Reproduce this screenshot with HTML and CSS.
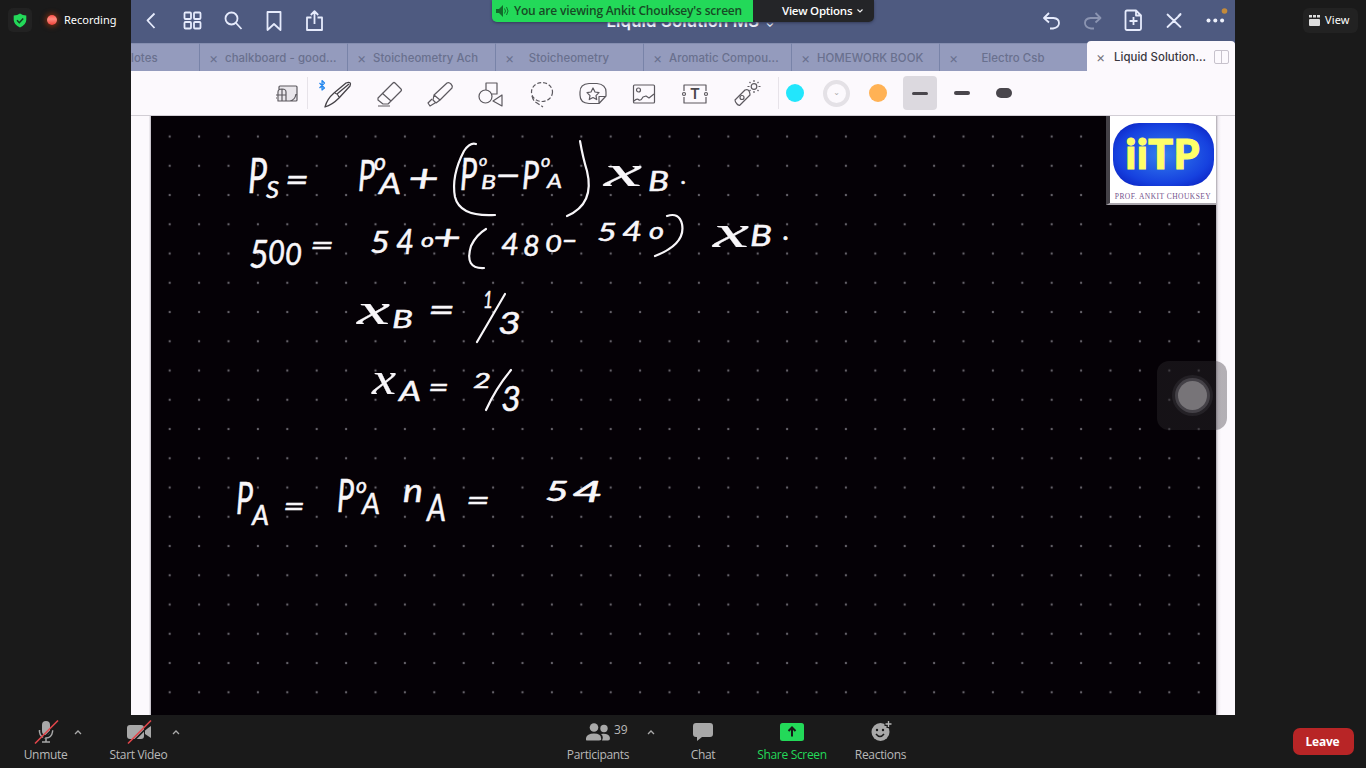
FILE: index.html
```html
<!DOCTYPE html>
<html lang="en">
<head>
<meta charset="utf-8">
<title>Shared screen</title>
<link rel="stylesheet" href="styles.css">
</head>
<body>
<div class="meeting">
  <aside class="side left">
    <span class="shield"><svg width="14" height="15" viewBox="0 0 14 15"><path d="M7 .5Q9.600 2.300 13.300 2.600V7Q13 12 7 14.500Q1 12 .7 7V2.600Q4.400 2.300 7 .5Z" fill="#23d959"/><path d="M4 7.300l2.300 2.400L10.200 5.500" fill="none" stroke="#143c20" stroke-width="1.500"/></svg></span>
    <i class="rec-dot"></i><span class="rec-label">Recording</span>
  </aside>
  <main class="share">
    <nav class="nav">
      <div class="nav-icons">
        <svg viewBox="0 0 30 30"><path d="M18 8.500l-7 7L18 23"/></svg>
        <svg viewBox="0 0 30 30"><rect x="7" y="7.500" width="6.500" height="6.500" rx="1"/><rect x="16.500" y="7.500" width="6.500" height="6.500" rx="1"/><rect x="7" y="17" width="6.500" height="6.500" rx="1"/><rect x="16.500" y="17" width="6.500" height="6.500" rx="1"/></svg>
        <svg viewBox="0 0 30 30"><circle cx="13" cy="13.500" r="6"/><path d="M17.500 18l5.500 6"/></svg>
        <svg viewBox="0 0 30 30"><path d="M8 7h13V25L14.500 19l-6.500 6Z"/></svg>
        <svg viewBox="0 0 30 30"><path d="M11 12.500H6.500v12.500h15V12.500H17M14 19V6.500M10.300 10l3.700-3.800 3.700 3.800"/></svg>
      </div>
      <h1>Liquid Solution MS <small>⌄</small></h1>
      <div class="nav-icons">
        <svg viewBox="0 0 30 30"><path d="M13.500 8l-5 5 5 4.500M9 13H18q5.500 .5 5.500 5t-6 5.500h-3"/></svg>
        <svg class="muted" viewBox="0 0 30 30"><path d="M19 8l5 5-5 4.500M23.500 13H14q-5.500 .5-5.500 5t6 5.500h3"/></svg>
        <svg viewBox="0 0 30 30"><path d="M9 5.500h9.500l5 5V23.500q0 1.500-1.500 1.500H9.500q-1.500 0-1.500-1.500V7q0-1.500 1.500-1.500M18.500 5.500v5h5M12 16h8M16 12v8"/></svg>
        <svg viewBox="0 0 30 30"><path d="M9 9.500L22 22M9 22L22 9.500M10 10.500l2 2M20 11l2-2" stroke-linecap="round"/></svg>
        <svg viewBox="0 0 30 30"><g class="dots"><circle cx="9" cy="15.500" r="2"/><circle cx="15.800" cy="15.500" r="2"/><circle cx="22.600" cy="15.500" r="2"/></g><circle class="alert" cx="25" cy="6" r="2.800"/></svg>
      </div>
    </nav>
    <div class="tabs">
      <div class="tab first"><span>lotes</span></div>
      <div class="tab"><b>×</b><span>chalkboard - good...</span></div>
      <div class="tab"><b>×</b><span>Stoicheometry Ach</span></div>
      <div class="tab"><b>×</b><span>Stoicheometry</span></div>
      <div class="tab"><b>×</b><span>Aromatic Compou...</span></div>
      <div class="tab"><b>×</b><span>HOMEWORK BOOK</span></div>
      <div class="tab"><b>×</b><span>Electro Csb</span></div>
      <div class="tab active"><b>×</b><span>Liquid Solution...</span><i class="split"></i></div>
    </div>
    <div class="tools">
      <div class="tool lined"><svg viewBox="0 0 32 32"><path class="tray" d="M8 8h18v15H8Z"/><path d="M8 12V9q0-1 1-1h16q1 0 1 1v13q0 1-1 1H7V14q0-3 4-3t4 3v9M5 17h10M6 20H5M11 11v12M19 23q5-1 6-7"/></svg></div>
      <div class="tool pen"><svg viewBox="0 0 32 32"><path d="M3 29q2-8 9-14L24 5q6-2 4 3L17 20Q10 27 3 29ZM13 15q3 1 4 4M15 16L27 6"/><path class="bt" d="M-2.500 5l5 5-2.500 2V2.500L2.500 5l-5 5"/></svg></div>
      <div class="tool"><svg viewBox="0 0 32 32"><path d="M5 20L20 5q1-1 2 0l6 6q1 1 0 2L15 26H10l-5-4ZM9 15l9 8M5 28h12"/></svg></div>
      <div class="tool"><svg viewBox="0 0 32 32"><path d="M10 17L23 5q2-1 4 1t1 4L16 22ZM10 17l-1 5 3 3 4-3M8 21l-4 4 2 3 5-3"/></svg></div>
      <div class="tool"><svg viewBox="0 0 32 32"><circle cx="10.500" cy="18.500" r="6.500"/><path d="M11 12V5h11v11h-5M27 17v11l-9-5Z"/></svg></div>
      <div class="tool"><svg viewBox="0 0 32 32"><ellipse cx="16" cy="14" rx="10.500" ry="9.500" stroke-dasharray="4 2"/><path d="M6 18q1 5 5 7l6 4" stroke-dasharray="5 2"/></svg></div>
      <div class="tool"><svg viewBox="0 0 32 32"><path d="M12 5.500h8q9 1 9 8.500v4l-7 7.500H12Q3 25 3 17v-3q0-8 9-8.500ZM22 25.500v-7h7"/><path d="M16 10l2 4 4 .6-3 3 .7 4L16 19.500 12.300 21.600l.7-4-3-3 4-.6Z"/></svg></div>
      <div class="tool"><svg viewBox="0 0 32 32"><rect x="5.500" y="7" width="21" height="18" rx="1"/><circle cx="10.500" cy="12" r="2"/><path d="M6 23q3-3 5-1 2 1 4-3l3-1 3 2 5-4"/></svg></div>
      <div class="tool"><svg viewBox="0 0 32 32"><path d="M5 13V7h22v6M5 19v6h22v-6"/><circle cx="5" cy="16" r="1.500"/><circle cx="27" cy="16" r="1.500"/><text x="16" y="21" text-anchor="middle">T</text></svg></div>
      <div class="tool"><svg viewBox="0 0 32 32"><path d="M5 22L15 12q3-1 4 1t1 4L10 27q-1 1-3-1t-2-4Z"/><circle cx="12" cy="19.500" r="2"/><circle cx="24" cy="8.500" r="2.800"/><path d="M24 2v2M24 13v2M17.500 8.500h2M28.500 8.500h2M19.500 4l1 1M27.500 12l1 1M28.500 4l-1 1M20.500 12l-1 1"/></svg></div>
      <div class="inks">
        <span><i class="ink cyan"></i></span><span><i class="ink white">⌄</i></span><span><i class="ink orange"></i></span>
        <span class="chosen"><i class="nib thin"></i></span><span><i class="nib"></i></span><span><i class="nib thick"></i></span>
      </div>
    </div>
    <section class="page">
      <svg class="board" width="1065" height="599" viewBox="151 116 1065 599">
        <defs><pattern id="grid" x="155" y="121.900" width="29.400" height="29.250" patternUnits="userSpaceOnUse"><circle cx="14.700" cy="14.600" r="1.150" fill="#66636a"/></pattern></defs>
        <rect x="151" y="116" width="1065" height="599" fill="#050106"/>
        <rect x="151" y="116" width="1065" height="599" fill="url(#grid)"/>
        <g class="ink-text">
          <text x="248" y="193" font-size="48" textLength="19" lengthAdjust="spacingAndGlyphs">P</text>
          <text x="266" y="198" font-size="24" textLength="13" lengthAdjust="spacingAndGlyphs">S</text>
          <text x="285" y="192" font-size="34" textLength="24" lengthAdjust="spacingAndGlyphs">=</text>
          <text x="358" y="191" font-size="43" textLength="17" lengthAdjust="spacingAndGlyphs">P</text>
          <text x="374" y="170" font-size="23" textLength="12">o</text>
          <text x="379" y="194" font-size="28" textLength="22" lengthAdjust="spacingAndGlyphs">A</text>
          <text x="408" y="192" font-size="38" textLength="31" lengthAdjust="spacingAndGlyphs">+</text>
          <text x="460" y="190" font-size="44" textLength="17" lengthAdjust="spacingAndGlyphs">P</text>
          <text x="479" y="166" font-size="16" textLength="10">o</text>
          <text x="481" y="189" font-size="20" textLength="15" lengthAdjust="spacingAndGlyphs">B</text>
          <text x="495" y="188" font-size="34" textLength="26" lengthAdjust="spacingAndGlyphs">−</text>
          <text x="522" y="189" font-size="39" textLength="17" lengthAdjust="spacingAndGlyphs">P</text>
          <text x="541" y="167" font-size="18" textLength="11">o</text>
          <text x="547" y="188" font-size="20" textLength="15" lengthAdjust="spacingAndGlyphs">A</text>
          <text class="var" x="604" y="186" font-size="45" textLength="38" lengthAdjust="spacingAndGlyphs">x</text>
          <text x="648" y="191" font-size="27" textLength="21" lengthAdjust="spacingAndGlyphs">B</text><text x="681" y="184" font-size="24">.</text>
          <text x="249" y="268" font-size="39" textLength="20" lengthAdjust="spacingAndGlyphs">5</text>
          <text x="268" y="264" font-size="33" textLength="17" lengthAdjust="spacingAndGlyphs">0</text>
          <text x="285" y="265" font-size="30" textLength="17" lengthAdjust="spacingAndGlyphs">0</text>
          <text x="310" y="255" font-size="29" textLength="24" lengthAdjust="spacingAndGlyphs">=</text>
          <text x="370" y="253" font-size="30" textLength="20" lengthAdjust="spacingAndGlyphs">5</text><text x="396" y="254" font-size="35" textLength="18" lengthAdjust="spacingAndGlyphs">4</text><text x="421" y="247" font-size="20" textLength="13" lengthAdjust="spacingAndGlyphs">o</text><text x="433" y="250" font-size="34" textLength="28" lengthAdjust="spacingAndGlyphs">+</text>
          <text x="501" y="255" font-size="31" textLength="17">4</text><text x="523" y="256" font-size="29" textLength="17">8</text><text x="545" y="252" font-size="24" textLength="17" lengthAdjust="spacingAndGlyphs">0</text><text x="562" y="251" font-size="28" textLength="15" lengthAdjust="spacingAndGlyphs">−</text>
          <text x="597" y="241" font-size="26" textLength="20" lengthAdjust="spacingAndGlyphs">5</text><text x="622" y="241" font-size="27" textLength="20" lengthAdjust="spacingAndGlyphs">4</text><text x="649" y="239" font-size="23" textLength="15" lengthAdjust="spacingAndGlyphs">o</text>
          <text class="var" x="713" y="247" font-size="46" textLength="36" lengthAdjust="spacingAndGlyphs">x</text><text x="750" y="246" font-size="28" textLength="22" lengthAdjust="spacingAndGlyphs">B</text><text x="783" y="240" font-size="28">.</text>
          <text class="var" x="357" y="324" font-size="44" textLength="33" lengthAdjust="spacingAndGlyphs">x</text><text x="392" y="328" font-size="26" textLength="21" lengthAdjust="spacingAndGlyphs">B</text><text x="428" y="322" font-size="34" textLength="27" lengthAdjust="spacingAndGlyphs">=</text><text x="483" y="308" font-size="24" textLength="10" lengthAdjust="spacingAndGlyphs">1</text><text x="498" y="334" font-size="31" textLength="23" lengthAdjust="spacingAndGlyphs">3</text>
          <text class="var" x="372" y="394" font-size="46" textLength="24" lengthAdjust="spacingAndGlyphs">x</text><text x="399" y="401" font-size="27" textLength="22" lengthAdjust="spacingAndGlyphs">A</text><text x="428" y="398" font-size="30" textLength="21" lengthAdjust="spacingAndGlyphs">=</text><text x="473" y="388" font-size="21" textLength="18" lengthAdjust="spacingAndGlyphs">2</text><text x="501" y="411" font-size="35" textLength="20" lengthAdjust="spacingAndGlyphs">3</text>
          <text x="236" y="514" font-size="45" textLength="17" lengthAdjust="spacingAndGlyphs">P</text><text x="252" y="525" font-size="27" textLength="17" lengthAdjust="spacingAndGlyphs">A</text><text x="283" y="516" font-size="29" textLength="22" lengthAdjust="spacingAndGlyphs">=</text>
          <text x="337" y="512" font-size="46" textLength="17" lengthAdjust="spacingAndGlyphs">P</text><text x="356" y="493" font-size="21" textLength="14">o</text><text x="362" y="514" font-size="29" textLength="18" lengthAdjust="spacingAndGlyphs">A</text><text x="403" y="502" font-size="32" textLength="20" lengthAdjust="spacingAndGlyphs">n</text><text x="427" y="521" font-size="37" textLength="19" lengthAdjust="spacingAndGlyphs">A</text><text x="466" y="510" font-size="29" textLength="24" lengthAdjust="spacingAndGlyphs">=</text>
          <text x="545" y="501" font-size="27" textLength="24" lengthAdjust="spacingAndGlyphs">5</text><text x="572" y="502" font-size="29" textLength="31" lengthAdjust="spacingAndGlyphs">4</text>
        </g>
        <g class="stroke">
          <path d="M476 144q-6-2-12 7q-13 25-9 46q5 20 40 18"/>
          <path d="M580 141q3 17 7 30q8 33-20 45"/>
          <path d="M486 229q-10 6-15 17q-7 23 13 22"/>
          <path d="M667 216q12-4 15 8q4 20-27 32"/>
          <path d="M505 294l-28 48M511 370q-15 18-25 40"/>
        </g>
      </svg>
      <div class="logo"><div class="oval">iiTP</div><p>PROF. ANKIT CHOUKSEY</p></div>
      <div class="assist"><i></i></div>
    </section>
    <div class="banner"><span class="viewing"><svg width="13" height="12" viewBox="0 0 13 12"><path d="M0 4h3l4-4v12L3 8H0Z" fill="#126b2b"/><path d="M8.500 3.500q2 2.500 0 5M10.500 2q3 4 0 8" fill="none" stroke="#126b2b"/></svg><span class="viewing-text">You are viewing Ankit Chouksey's screen</span></span><span class="options"><span>View Options</span><svg width="8" height="6" viewBox="0 0 8 6"><path d="M1.500 1.500l2.500 2.500 2.500-2.500" fill="none" stroke="#eee" stroke-width="1.200"/></svg></span></div>
  </main>
  <aside class="side right"><span class="view"><svg width="11" height="11" viewBox="0 0 11 11" fill="#ddd"><rect width="3" height="2.500"/><rect x="4" width="3" height="2.500"/><rect x="8" width="3" height="2.500"/><rect y="4" width="11" height="7" rx="1"/></svg><span>View</span></span></aside>
  <footer class="controls">
    <div class="control unmute"><svg width="26" height="26" viewBox="0 0 26 26"><rect x="9" y="2" width="8" height="14" rx="4" fill="#a8a8a8"/><path d="M6.500 11v2q1 6 6.500 6t6.500-6v-2M13 19v4M9 23h8" class="line"/><path class="slash-gap" d="M3.500 26L26.500 3"/><path class="slash" d="M2 24.500l23-23"/></svg><span>Unmute</span></div>
    <svg class="caret c1" viewBox="0 0 8 6"><path d="M1 5l3-3 3 3"/></svg>
    <div class="control video"><svg width="26" height="26" viewBox="0 0 26 26"><rect x="1" y="6" width="17" height="14" rx="3" fill="#a8a8a8"/><path d="M19 11l6-4v12l-6-4Z" fill="#a8a8a8"/><path class="slash-gap" d="M3.500 26L26.500 3"/><path class="slash" d="M2 24.500l23-23"/></svg><span>Start Video</span></div>
    <svg class="caret c2" viewBox="0 0 8 6"><path d="M1 5l3-3 3 3"/></svg>
    <div class="control people"><svg width="26" height="26" viewBox="0 0 26 26" fill="#a8a8a8"><circle cx="9" cy="8.500" r="4.300"/><circle cx="19" cy="9.500" r="3.700"/><path d="M1 21v-2q1-4.500 8-4.500t7 4.500q1 2.500-2 2.500H3q-2 0-2-.5ZM17 21.500q2-4-1-6.500 8-1 9 4 0 2.500-2 2.500Z"/></svg><em>39</em><span>Participants</span></div>
    <svg class="caret c3" viewBox="0 0 8 6"><path d="M1 5l3-3 3 3"/></svg>
    <div class="control chat"><svg width="26" height="26" viewBox="0 0 26 26"><path d="M6 4h14q3 0 3 3v8q0 3-3 3h-8l-5 4v-4H6q-3 0-3-3V7q0-3 3-3Z" fill="#a8a8a8"/></svg><span>Chat</span></div>
    <div class="control sharing"><svg width="26" height="26" viewBox="0 0 26 26"><rect x="1" y="4" width="24" height="18" rx="2.500" fill="#23d959"/><path d="M13 17.500V9M9.500 12L13 8.500l3.500 3.500" fill="none" stroke="#181818" stroke-width="2"/></svg><span>Share Screen</span></div>
    <div class="control react"><svg width="26" height="26" viewBox="0 0 26 26"><circle cx="12.500" cy="13" r="9" fill="#a8a8a8"/><circle cx="9" cy="11" r="1.200" fill="#191919"/><circle cx="15" cy="11" r="1.200" fill="#191919"/><path d="M8 15q4 5 8 0" fill="none" stroke="#191919" stroke-width="1.500"/><path d="M20.500 1v8M16.500 5h8" stroke="#191919" stroke-width="4"/><path d="M20.500 2v6M17.500 5h6" stroke="#b5b5b5" stroke-width="1.300"/></svg><span>Reactions</span></div>
    <button class="leave">Leave</button>
  </footer>
</div>
</body>
</html>
```
FILE: styles.css
```css
* { box-sizing: border-box; }
body { margin: 0; width: 1366px; height: 768px; overflow: hidden; background: #1a1a1a; font-family: "Open Sans", sans-serif; }
.meeting { display: grid; grid-template: 715px 53px / 131px 1104px 131px; }
.side { display: flex; align-items: flex-start; color: #fff; font: 12px/20px "Noto Sans", sans-serif; }
.left { padding: 8px 0 0 8px; }
.shield { width: 24px; height: 24px; display: grid; place-items: center; background: #222; border-radius: 5px; }
.rec-dot { width: 10px; height: 10px; margin: 7px 7px 0 15px; border-radius: 50%; background: linear-gradient(#ff5148, #ff8b80 40%, #f24137); box-shadow: 0 0 5px 2px #6b2b12; }
.rec-label { padding-top: 2px; font-size: 11px; }
.right { justify-content: flex-end; padding: 8px 8px 0 0; }
.view { display: flex; align-items: center; gap: 5px; width: 55px; height: 25px; padding: 0 0 1px 6px; background: #222; border-radius: 6px; font-size: 11px; letter-spacing: .15px; }
.share { position: relative; display: grid; grid-template-rows: 43px 28px 45px 599px; overflow: hidden; font-family: Inter, sans-serif; background: #fcf9fd; }
.nav { display: flex; justify-content: space-between; background: #4e5a80; color: #eef1fb; }
.nav h1 { margin: 0; padding-left: 15px; font-size: 16.8px; line-height: 42px; font-weight: 600; letter-spacing: .1px; }
.nav small { font-size: 11px; margin-left: 2px; }
.nav-icons { display: flex; }
.nav-icons svg { width: 41px; height: 30px; margin-top: 5px; fill: none; stroke: #e6ebfc; stroke-width: 1.8; stroke-linejoin: round; overflow: visible; }
.nav-icons .muted { opacity: .4; }
.nav-icons .dots { fill: #eef1fb; stroke: none; }
.nav-icons .alert { fill: #c38a3a; stroke: none; }
.tabs { display: grid; grid-template-columns: 68px repeat(7, 148px); background: #949bbd; }
.tab { display: flex; align-items: center; border-left: 1px solid #7883a8; border-top: 1px solid #858eb0; font-size: 11.4px; color: #69708e; white-space: nowrap; font-weight: 500; letter-spacing: .06px; }
.tab.first { border-left: 0; overflow: hidden; }
.tab b { width: 25px; padding: 0 0 1px 9px; font-size: 14px; font-weight: 400; flex: none; }
.tab span { width: 96px; text-align: center; }
.tab.first span { text-align: left; }
.tab.active { margin-top: -2px; background: #fcf9fd; color: #39373f; border: 0; border-radius: 4px 4px 0 0; padding-top: 2px; }
.active b { color: #77747b; }
.split { width: 15px; height: 14px; margin-left: 6px; border: 1px solid #c7c2cc; border-radius: 2px; background: linear-gradient(90deg, transparent 6px, #c7c2cc 6px, #c7c2cc 7px, transparent 7px); }
.tools { display: flex; padding-left: 130px; border-bottom: 1px solid #d2ced5; }
.tool { width: 51.1px; height: 44px; padding-top: 1px; display: grid; place-items: center; }
.tool.lined { background: linear-gradient(#e7e3e9, #e7e3e9) 46px 6px / 1px 32px no-repeat; }
.tool svg { width: 32px; height: 32px; fill: none; stroke: #5c595f; stroke-width: 1.2; stroke-linejoin: round; overflow: visible; }
.tool text { font: 600 15px Inter, sans-serif; stroke: none; fill: #4b484e; }
.tool .tray { fill: #e9e6eb; stroke: none; }
.tool.pen svg { stroke-width: 1.3; stroke: #454247; }
.tool .bt { stroke: #2286ed; stroke-width: 1.2; }
.inks { display: flex; margin-left: 2px; background: linear-gradient(#e7e3e9, #e7e3e9) 4px 6px / 1px 32px no-repeat; }
.inks span { width: 41.8px; height: 44px; display: grid; place-items: center; }
.inks .chosen { width: 34px; height: 34px; margin: 5px 3.9px; border-radius: 4px; background: #dcd9df; }
.ink { width: 18px; height: 18px; border-radius: 50%; font: 8px/18px "DejaVu Sans", sans-serif; text-align: center; }
.cyan { background: #22e6fc; }
.orange { background: #ffb255; }
.white { width: 27px; height: 27px; border: 4px solid #e4e1e6; color: #aaa; }
.nib { width: 16px; height: 4px; border-radius: 2px; background: #49464c; }
.nib.thin { height: 3px; }
.nib.thick { height: 10px; border-radius: 5px; }
.page { position: relative; padding-left: 20px; background: linear-gradient(90deg, transparent 18px, #b8b4bc 20px, transparent 20px, transparent 1085px, #aaa6ad 1085px, #eeeaf0 1087px, #fcf9fd 1090px); }
.board { display: block; }
.ink-text { fill: #f8f6f9; stroke: #f8f6f9; stroke-width: .5; stroke-linejoin: round; font-family: Lato, sans-serif; font-style: italic; }
.ink-text .var { font-family: "Liberation Serif", serif; stroke-width: .2; }
.stroke { fill: none; stroke: #f8f6f9; stroke-width: 2.2; stroke-linecap: round; stroke-linejoin: round; }
.logo { position: absolute; top: 0; right: 19px; width: 110px; height: 89px; padding-top: 7px; background: #fff; border-left: 4px solid #444147; border-bottom: 2px solid #aaa6ad; text-align: center; }
.oval { width: 101px; height: 63px; margin: auto; border-radius: 26px; background: radial-gradient(#347fee, #1641df 65%, #0615b5); font: 900 41px/61px Lato, sans-serif; color: #ffff69; letter-spacing: .8px; -webkit-text-stroke: 1.2px #ffff69; }
.logo p { margin: 6px 0 0; font: 7.5px/9px "Liberation Serif", serif; color: #74518c; letter-spacing: .45px; white-space: nowrap; }
.assist { position: absolute; left: 1026px; top: 245px; width: 70px; height: 69px; border-radius: 12px; background: linear-gradient(90deg, rgba(35, 32, 36, .55) 59px, rgba(70, 65, 72, .4) 59px); display: grid; place-items: center; }
.assist i { width: 29px; height: 29px; border-radius: 50%; background: #777478; box-shadow: 0 0 0 3px #444147, 0 0 0 6px #242126; }
.banner { position: absolute; left: 361px; top: 0; display: flex; height: 22px; font: 600 12px/22px "Open Sans", sans-serif; border-radius: 0 0 5px 5px; overflow: hidden; box-shadow: 0 1px 3px #333b58; }
.viewing { width: 261px; padding-left: 4px; display: flex; align-items: center; gap: 5px; background: #23d959; color: #174b25; white-space: nowrap; letter-spacing: -.17px; }
.options { width: 121px; padding-left: 29px; display: flex; align-items: center; gap: 4px; background: #242528; color: #fff; white-space: nowrap; font-size: 11.5px; letter-spacing: -.25px; }
.controls { grid-column: 1 / 4; display: grid; grid-template-columns: 24px 43px 7px 10px 25px 59px 4px 10px 385px 62px 18px 12px 27px 34px 37px 70px 28px 51px 387px 61px; align-items: start; background: #1a1a1a; }
.control { position: relative; height: 50px; display: flex; flex-direction: column; align-items: center; padding-top: 4px; color: #b9b9b9; font-size: 12px; line-height: 18px; white-space: nowrap; letter-spacing: -.32px; }
.control > svg { height: 26px; flex: none; }
.control span { margin-top: 1px; }
.unmute { grid-column: 2; }
.video { grid-column: 6; }
.people { grid-column: 10; }
.chat { grid-column: 14; }
.sharing { grid-column: 16; color: #23d959; }
.react { grid-column: 18; }
.control em { position: absolute; left: 47px; top: 6px; font-style: normal; letter-spacing: 0; }
.line { fill: none; stroke: #a8a8a8; stroke-width: 1.5; }
.slash { stroke: #e2464b; stroke-width: 1.6; }
.slash-gap { stroke: #1a1a1a; stroke-width: 1.6; }
.caret { width: 8px; height: 6px; margin-top: 14px; fill: none; stroke: #aaa; stroke-width: 1.3; }
.c1 { grid-column: 4; }
.c2 { grid-column: 8; }
.c3 { grid-column: 12; }
.leave { grid-column: 20; height: 27px; margin-top: 13px; padding: 0 2px 0 0; border: 0; border-radius: 7px; background: #b82526; color: #fff; font: 700 12px "Open Sans", sans-serif; letter-spacing: -.2px; }
```
